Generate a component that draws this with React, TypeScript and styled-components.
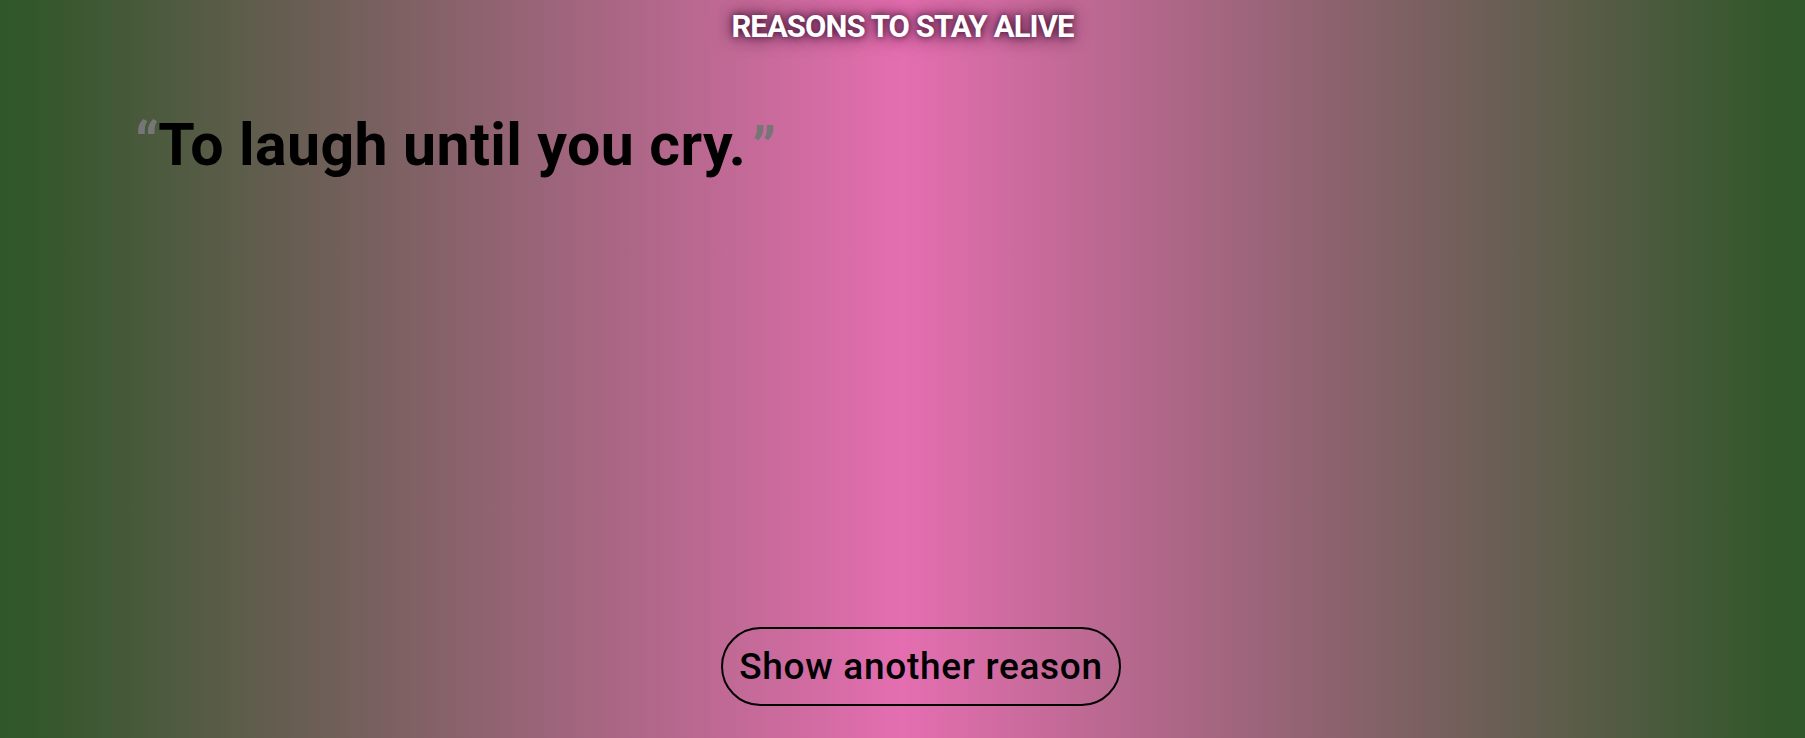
import React from "react";
import styled, { createGlobalStyle } from "styled-components";

const Global = createGlobalStyle`
  html, body { margin: 0; padding: 0; }
  body { font-family: Roboto, "Liberation Sans", Arial, sans-serif; }
`;

const Page = styled.main`
  height: 738px;
  box-sizing: border-box;
  display: flex;
  flex-direction: column;
  background: linear-gradient(
    to right,
    #30572a 0%,
    #33572b 2%,
    #e46eb0 50%,
    #33572b 98%,
    #30572a 100%
  );
`;

const Title = styled.h1`
  margin: 9px 0 0;
  text-align: center;
  font-family: Roboto, "Liberation Sans", sans-serif;
  font-weight: 700;
  font-size: 31px;
  line-height: 36px;
  letter-spacing: -0.9px;
  color: #ffffff;
  text-transform: uppercase;
  text-shadow: 0 0 6px rgba(70, 20, 55, 0.9), 0 0 14px rgba(70, 20, 55, 0.7),
    0 0 22px rgba(70, 20, 55, 0.4);
`;

const Quote = styled.blockquote`
  margin: 65px 0 0 135px;
  font-family: Roboto, "Liberation Sans", sans-serif;
  font-weight: 700;
  font-size: 59px;
  line-height: 70px;
  letter-spacing: 0.4px;
  color: #000;
  white-space: nowrap;
`;

const Mark = styled.span<{ $close?: boolean }>`
  color: #767676;
  vertical-align: ${(p) => (p.$close ? "-4px" : "0")};
  margin-left: ${(p) => (p.$close ? "6px" : "0")};
  margin-right: ${(p) => (p.$close ? "0" : "-1px")};
`;

const Spacer = styled.div`
  flex: 1;
`;

const Footer = styled.div`
  display: flex;
  justify-content: center;
  padding-bottom: 32px;
`;

const Button = styled.button`
  height: 79px;
  padding: 0 16px;
  border: 2px solid #000;
  border-radius: 40px;
  background: transparent;
  color: #000;
  font-family: Roboto, "Liberation Sans", sans-serif;
  font-weight: 500;
  font-size: 37px;
  letter-spacing: 0.7px;
  cursor: pointer;
  margin-left: 37px;
`;

export default function App() {
  return (
    <>
      <Global />
      <Page>
        <Title>Reasons to stay alive</Title>
        <Quote>
          <Mark>“</Mark>
          To laugh until you cry.
          <Mark $close>”</Mark>
        </Quote>
        <Spacer />
        <Footer>
          <Button>Show another reason</Button>
        </Footer>
      </Page>
    </>
  );
}
